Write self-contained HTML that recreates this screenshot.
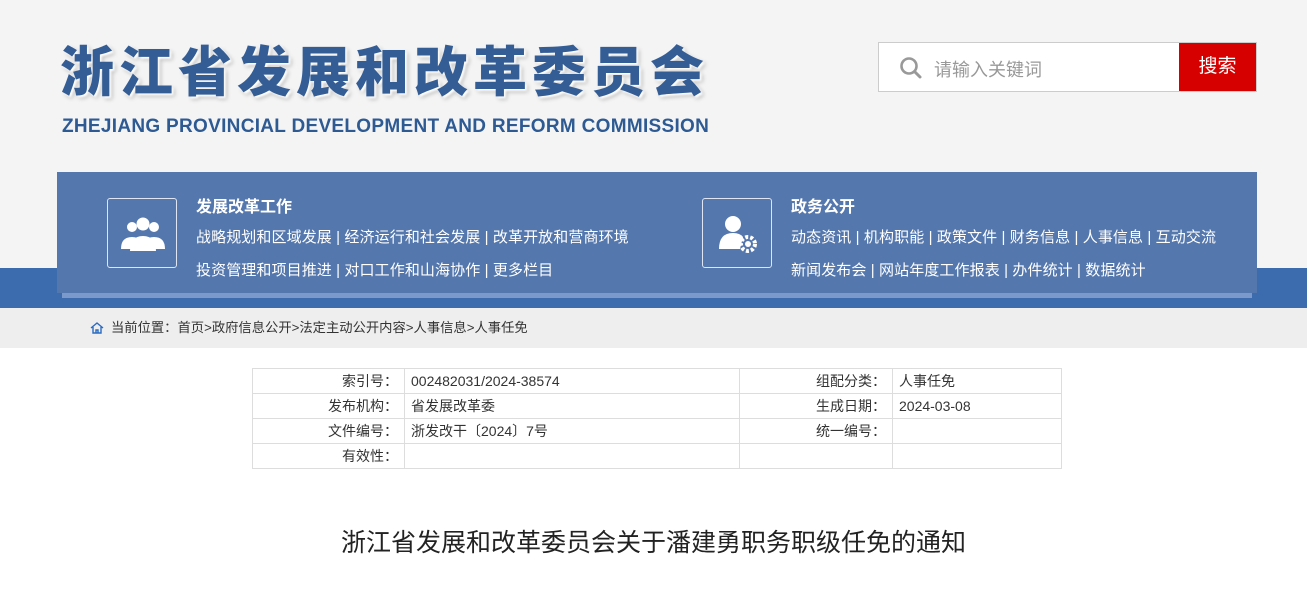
<!DOCTYPE html>
<html><head><meta charset="utf-8"><style>
*{margin:0;padding:0;box-sizing:border-box}
body{width:1307px;height:590px;background:#fff;font-family:"Liberation Sans","Noto Sans CJK SC",sans-serif;position:relative;overflow:hidden}
.hdr{position:absolute;left:0;top:0;width:1307px;height:308px;background:#f4f4f4}
.band{position:absolute;left:0;top:268px;width:1307px;height:40px;background:#3c6cae}
.title{position:absolute;left:60px;top:40px;font-size:54px;font-weight:900;color:#345d95;letter-spacing:5px;text-shadow:2px 2px 2px #fff,3px 3px 4px rgba(0,0,0,.25);line-height:66px;white-space:nowrap}
.en{position:absolute;left:62px;top:116px;font-size:19px;font-weight:bold;color:#2e5a94;white-space:nowrap;letter-spacing:0.3px}
.search{position:absolute;left:878px;top:42px;width:379px;height:50px;border:1px solid #ccc;background:#fff}
.search .ph{position:absolute;left:55px;top:13px;font-size:18px;color:#999}
.search .btn{position:absolute;right:0;top:0;width:77px;height:48px;background:#d60000;color:#fff;font-size:19px;text-align:center;line-height:48px}
.nav{position:absolute;left:57px;top:172px;width:1200px;height:121px;background:#5477ad;color:#fff}
.navsh{position:absolute;left:62px;top:293px;width:1190px;height:5px;background:#7b9acb}
.ib{position:absolute;top:26px;width:70px;height:70px;border:1px solid #dfe6f2;border-radius:3px}
.h{position:absolute;top:21px;font-size:16px;font-weight:bold}
.l{position:absolute;font-size:15px;white-space:nowrap;letter-spacing:0.1px}
.crumb{position:absolute;left:0;top:308px;width:1307px;height:40px;background:#eee;font-size:13.3px;color:#333;line-height:40px;padding-left:111px}
table{position:absolute;left:252px;top:368px;border-collapse:collapse;font-size:14px;color:#333}
td{border:1px solid #ddd;height:25px;padding:0 6px;white-space:nowrap}
td.k{text-align:right}
.doc{position:absolute;left:0;width:1307px;top:523px;text-align:center;font-size:25px;color:#222}
</style></head><body>
<div class="hdr"></div>
<div class="band"></div>
<div class="title">浙江省发展和改革委员会</div>
<div class="en">ZHEJIANG PROVINCIAL DEVELOPMENT AND REFORM COMMISSION</div>
<div class="search">
<svg style="position:absolute;left:20px;top:13px" width="24" height="24" viewBox="0 0 24 24"><circle cx="10" cy="10" r="7.5" fill="none" stroke="#999" stroke-width="2.6"/><path d="M15.5 15.5L21 21" stroke="#999" stroke-width="3" stroke-linecap="round"/></svg>
<div class="ph">请输入关键词</div><div class="btn">搜索</div></div>
<div class="navsh"></div>
<div class="nav">
<div class="ib" style="left:50px"><svg width="70" height="70" viewBox="0 0 70 70"><g fill="#fff"><circle cx="24" cy="28" r="5"/><circle cx="46" cy="28" r="5"/><path d="M13 50q0-12 11-12 11 0 11 12z"/><path d="M35 50q0-12 11-12 11 0 11 12z"/><circle cx="35" cy="25" r="6.5"/><path d="M22 52q0-15 13-15 13 0 13 15z"/></g></svg></div>
<div class="h" style="left:139px">发展改革工作</div>
<div class="l" style="left:139px;top:54px">战略规划和区域发展 | 经济运行和社会发展 | 改革开放和营商环境</div>
<div class="l" style="left:139px;top:87px">投资管理和项目推进 | 对口工作和山海协作 | 更多栏目</div>
<div class="ib" style="left:645px"><svg width="70" height="70" viewBox="0 0 70 70"><g fill="#fff"><circle cx="30" cy="25" r="8"/><path d="M16 50q0-16 14-16 7 0 10 4l-3 12z"/><circle cx="45" cy="45" r="7" fill="none" stroke="#fff" stroke-width="4" stroke-dasharray="3 2"/><circle cx="45" cy="45" r="3"/></g></svg></div>
<div class="h" style="left:734px">政务公开</div>
<div class="l" style="left:734px;top:54px">动态资讯 | 机构职能 | 政策文件 | 财务信息 | 人事信息 | 互动交流</div>
<div class="l" style="left:734px;top:87px">新闻发布会 | 网站年度工作报表 | 办件统计 | 数据统计</div>
</div>
<div class="crumb"><svg style="position:absolute;left:90px;top:14px" width="14" height="12" viewBox="0 0 14 12"><path d="M1 6L7 1l6 5M3 5v6h8V5M6 11V8h2v3" fill="none" stroke="#2a6bc0" stroke-width="1.4"/></svg>当前位置：首页&gt;政府信息公开&gt;法定主动公开内容&gt;人事信息&gt;人事任免</div>
<table>
<tr><td class="k" style="width:152px">索引号：</td><td style="width:335px">002482031/2024-38574</td><td class="k" style="width:153px">组配分类：</td><td style="width:169px">人事任免</td></tr>
<tr><td class="k">发布机构：</td><td>省发展改革委</td><td class="k">生成日期：</td><td>2024-03-08</td></tr>
<tr><td class="k">文件编号：</td><td>浙发改干〔2024〕7号</td><td class="k">统一编号：</td><td></td></tr>
<tr><td class="k">有效性：</td><td></td><td></td><td></td></tr>
</table>
<div class="doc">浙江省发展和改革委员会关于潘建勇职务职级任免的通知</div>
</body></html>
